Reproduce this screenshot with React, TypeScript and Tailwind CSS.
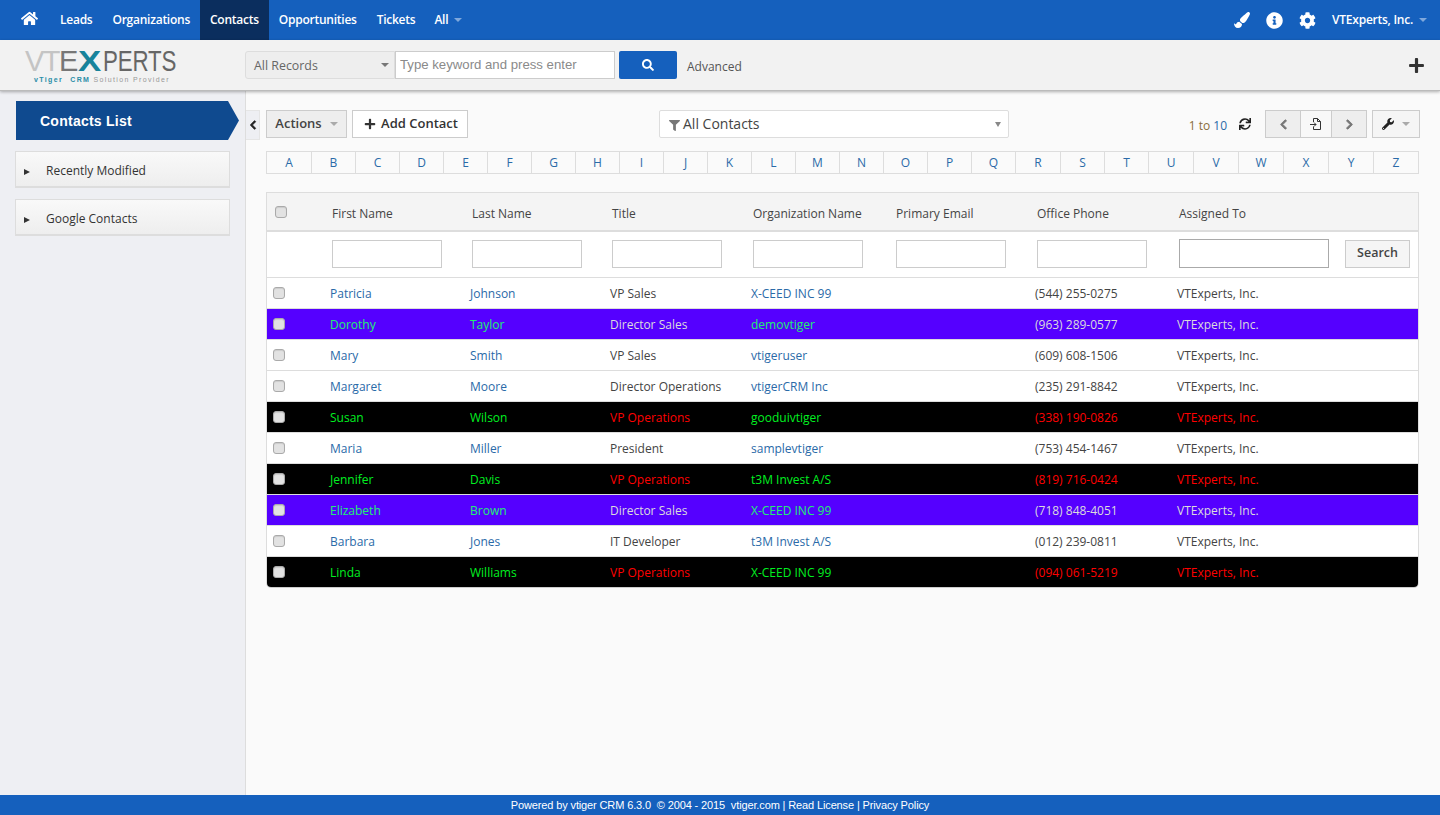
import { FaHome, FaPaintBrush, FaInfoCircle, FaCog, FaSearch, FaPlus, FaChevronLeft, FaChevronRight, FaSync, FaWrench, FaFilter } from "react-icons/fa";

const NAV = ["Leads", "Organizations", "Contacts", "Opportunities", "Tickets"];
const LETTERS = "ABCDEFGHIJKLMNOPQRSTUVWXYZ".split("");
const WIDE_LETTERS = "ARUVWXY";
const COLUMNS = ["First Name", "Last Name", "Title", "Organization Name", "Primary Email", "Office Phone", "Assigned To"];

type Contact = {
  first: string;
  last: string;
  title: string;
  org: string;
  phone: string;
  tone?: "purple" | "black";
};

const CONTACTS: Contact[] = [
  { first: "Patricia", last: "Johnson", title: "VP Sales", org: "X-CEED INC 99", phone: "(544) 255-0275" },
  { first: "Dorothy", last: "Taylor", title: "Director Sales", org: "demovtiger", phone: "(963) 289-0577", tone: "purple" },
  { first: "Mary", last: "Smith", title: "VP Sales", org: "vtigeruser", phone: "(609) 608-1506" },
  { first: "Margaret", last: "Moore", title: "Director Operations", org: "vtigerCRM Inc", phone: "(235) 291-8842" },
  { first: "Susan", last: "Wilson", title: "VP Operations", org: "gooduivtiger", phone: "(338) 190-0826", tone: "black" },
  { first: "Maria", last: "Miller", title: "President", org: "samplevtiger", phone: "(753) 454-1467" },
  { first: "Jennifer", last: "Davis", title: "VP Operations", org: "t3M Invest A/S", phone: "(819) 716-0424", tone: "black" },
  { first: "Elizabeth", last: "Brown", title: "Director Sales", org: "X-CEED INC 99", phone: "(718) 848-4051", tone: "purple" },
  { first: "Barbara", last: "Jones", title: "IT Developer", org: "t3M Invest A/S", phone: "(012) 239-0811" },
  { first: "Linda", last: "Williams", title: "VP Operations", org: "X-CEED INC 99", phone: "(094) 061-5219", tone: "black" },
];

function Caret({ className }: { className: string }) {
  return <span className={`inline-block h-0 w-0 border-x-4 border-t-4 border-x-transparent ${className}`} />;
}

function Check() {
  return <span className="block h-3 w-3 rounded-[3px] border border-[#aaa] bg-[#e2e2e2] shadow-[inset_0_1px_1px_rgba(0,0,0,0.1)]" />;
}

function SideCard({ label }: { label: string }) {
  return (
    <div className="ml-[15px] flex h-[37px] w-[215px] items-center border border-[#ddd] border-b-2 bg-gradient-to-b from-[#f9f9f9] to-[#eeeeee] text-[12px] text-[#333]">
      <span className="ml-2 mr-4 mt-[5px] h-0 w-0 border-y-[3px] border-l-[6px] border-y-transparent border-l-[#333]" />
      <span className="pt-[3px]">{label}</span>
    </div>
  );
}

function ContactRow({ c }: { c: Contact }) {
  const bg = c.tone === "purple" ? "bg-[#5500ff]" : c.tone === "black" ? "bg-black" : "bg-white";
  const link = c.tone === "purple" ? "text-[#22f070]" : c.tone === "black" ? "text-[#00f020]" : "text-[#2a6aa8]";
  const plain = c.tone === "purple" ? "text-[#dcdcdc]" : c.tone === "black" ? "text-[#ff0000]" : "text-[#444]";
  return (
    <tr className={`h-[31px] border-b border-[#ddd] last:border-b-0 ${bg}`}>
      <td className="pl-[6px]"><Check /></td>
      <td className={`pt-[3px] ${link}`}>{c.first}</td>
      <td className={`pt-[3px] ${link}`}>{c.last}</td>
      <td className={`pt-[3px] ${plain}`}>{c.title}</td>
      <td className={`pt-[3px] ${link}`}>{c.org}</td>
      <td />
      <td className={`pt-[3px] ${plain}`}>{c.phone}</td>
      <td className={`pt-[3px] ${plain}`} colSpan={2}>VTExperts, Inc.</td>
    </tr>
  );
}

export default function App() {
  return (
    <div className="flex h-[815px] flex-col overflow-hidden bg-[#fafafa] font-['Open_Sans',sans-serif] text-[12px] text-[#333]">
      <header className="flex h-10 shrink-0 items-center bg-[#1560bd] text-[12px] font-semibold text-white">
        <FaHome className="ml-[21px] mr-3 mb-1 text-[17px]" />
        {NAV.map((item) => (
          <a
            key={item}
            className={`flex h-10 items-center px-2.5 tracking-[-0.25px] ${item === "Contacts" ? "bg-[#0b2e5e]" : ""}`}
          >
            {item}
          </a>
        ))}
        <span className="ml-[9px] flex items-center gap-1.5 tracking-[-0.25px]">
          All <Caret className="border-t-[#7fa8dc]" />
        </span>
        <div className="ml-auto mr-[13px] flex items-center">
          <FaPaintBrush className="mr-4 text-[16px]" />
          <FaInfoCircle className="mr-[16px] text-[17px]" />
          <FaCog className="mr-[16px] text-[17px]" />
          <span className="tracking-[-0.25px]">VTExperts, Inc.</span>
          <Caret className="ml-[6px] border-t-[#7fa8dc]" />
        </div>
      </header>

      <div className="relative z-10 flex h-[51px] shrink-0 items-center border-b border-[#bbb] bg-[#f2f2f2] shadow-[0_1px_3px_rgba(0,0,0,0.3)]">
        <div className="ml-[25px] w-[220px] font-['Liberation_Sans',sans-serif]">
          <div className="mt-[2px] flex h-6 items-center whitespace-nowrap text-[29px] leading-6">
            <span className="tracking-[-1.5px] text-[#c4c4c4]">VT</span>
            <span className="text-[#777]">E</span>
            <span className="inline-block w-[25px] origin-left scale-x-[1.2] font-bold text-[#17839b]">X</span>
            <span className="inline-block origin-left scale-x-[0.77] tracking-[-0.2px] text-[#666]">PERTS</span>
          </div>
          <div className="ml-[9px] mt-[2px] whitespace-nowrap text-[7px] leading-[9px] tracking-[1.35px] text-[#999]">
            <span className="font-bold text-[#2a8ea8]">vTiger</span>{" "}
            <span className="ml-1 font-bold text-[#2a8ea8]">CRM</span> Solution Provider
          </div>
        </div>
        <div className="flex h-7 w-[150px] items-center justify-between rounded-l-[3px] border border-[#ddd] bg-[#eeeeee] pl-2 pr-[5px] text-[12.4px] text-[#666]">
          <span className="pt-[2px]">All Records</span> <Caret className="border-t-[#777]" />
        </div>
        <input
          placeholder="Type keyword and press enter"
          className="h-7 w-[220px] border border-[#ccc] bg-white px-1 pb-[2px] font-['Liberation_Sans',sans-serif] text-[13.2px] placeholder:text-[#8a8a8a]"
        />
        <button className="ml-1 flex h-7 w-[58px] items-center justify-center rounded-[2px] bg-[#1560bd] text-[12px] text-white">
          <FaSearch />
        </button>
        <a className="ml-[10px] pt-1 text-[#555]">Advanced</a>
        <FaPlus className="ml-auto mr-[15px] text-[17px] text-[#333]" />
      </div>

      <div className="flex min-h-0 flex-1">
        <aside className="flex w-[246px] shrink-0 flex-col gap-[11px] border-r border-[#ddd] bg-[#eeeff3] pt-[10px]">
          <div className="ml-4 flex h-[39px] w-[223px] items-center bg-[#0f4a8f] pl-6 pt-[2px] font-['Liberation_Sans',sans-serif] text-[14px] font-bold tracking-[0.25px] text-white [clip-path:polygon(0_0,212px_0,100%_50%,212px_100%,0_100%)]">
            Contacts List
          </div>
          <SideCard label="Recently Modified" />
          <SideCard label="Google Contacts" />
        </aside>

        <main className="relative min-w-0 flex-1 pl-5 pr-[21px] pt-[19px]">
          <div className="absolute left-0 top-[19px] flex h-[30px] w-[14px] items-center justify-center border-y border-r border-[#e5e5e5] bg-[#eeeff3] text-[10px] text-[#222]">
            <FaChevronLeft stroke="currentColor" strokeWidth={40} />
          </div>

          <div className="flex h-7 items-center">
            <button className="flex h-7 w-[81px] items-center justify-center gap-2 border border-[#ccc] bg-[#eeeeee] text-[13px] font-semibold text-[#444]">
              Actions <Caret className="border-t-[#aaa]" />
            </button>
            <button className="ml-[5px] flex h-7 w-[116px] items-center justify-center gap-[5px] border border-[#ccc] bg-white pl-[2px] text-[13px] font-semibold text-[#333]">
              <FaPlus className="text-[12px]" /> Add Contact
            </button>
            <div className="ml-[191px] flex h-7 w-[350px] items-center rounded-[2px] border border-[#ddd] bg-white pl-[9px] pr-[7px] text-[14px] text-[#444]">
              <FaFilter className="mr-[3px] mt-[2px] text-[11px] text-[#777]" /> <span className="pb-[2px]">All Contacts</span>
              <Caret className="ml-auto border-x-[3px] border-t-[5px] border-t-[#888]" />
            </div>
            <span className="ml-auto pt-[3px] text-[12px] text-[#8a6d3b]">
              1 to <span className="text-[#2a6aa8]">10</span>
            </span>
            <FaSync className="ml-[12px] text-[12px] text-[#222]" />
            <div className="ml-[14px] flex h-7 w-[102px] items-stretch border border-[#ccc] bg-[#eeeeee] text-[#777]">
              <span className="flex flex-1 items-center justify-center text-[11px]"><FaChevronLeft stroke="currentColor" strokeWidth={40} /></span>
              <span className="flex w-8 items-center justify-center border-x border-[#ccc] bg-[#f8f8f8]">
                <svg width="14" height="14" viewBox="0 0 14 14" fill="none" stroke="#333" strokeWidth="1">
                  <path d="M4.5 5V1.5h4l3 3v8h-7V9.5M8.5 1.5v3h3M1 7.5h6M5 5.5l2 2-2 2" />
                </svg>
              </span>
              <span className="flex flex-1 items-center justify-center text-[11px]"><FaChevronRight stroke="currentColor" strokeWidth={40} /></span>
            </div>
            <button className="-mr-px ml-[5px] flex h-7 w-[48px] items-center justify-center gap-2 border border-[#ccc] bg-[#f5f5f5] text-[12px] text-[#222]">
              <FaWrench /> <Caret className="border-t-[#aaa]" />
            </button>
          </div>

          <div className="mt-[13px] flex h-[23px] border border-[#ddd] bg-[#fafafa]">
            {LETTERS.map((l) => (
              <a
                key={l}
                className={`flex shrink-0 items-center justify-center border-r border-[#ddd] text-[#2a6aa8] last:border-r-0 ${WIDE_LETTERS.includes(l) ? "w-[45px]" : "w-[44px]"}`}
              >
                {l}
              </a>
            ))}
          </div>

          <div className="mt-[18px] overflow-hidden rounded-b-[5px] border border-[#ddd] border-b-[#ccc]">
            <table className="w-full table-fixed border-collapse">
              <colgroup>
                <col className="w-[63px]" />
                <col className="w-[140px]" />
                <col className="w-[140px]" />
                <col className="w-[141px]" />
                <col className="w-[143px]" />
                <col className="w-[141px]" />
                <col className="w-[142px]" />
                <col className="w-[166px]" />
                <col />
              </colgroup>
              <thead>
                <tr className="h-[38px] border-b-2 border-[#ddd] bg-[#f4f4f4] text-left font-normal text-[#444]">
                  <th className="pl-2 font-normal"><Check /></th>
                  {COLUMNS.map((c) => (
                    <th key={c} className="pl-[2px] pt-[5px] font-normal">{c}</th>
                  ))}
                  <th />
                </tr>
                <tr className="h-[46px] border-b border-[#ddd] bg-white">
                  <th />
                  {COLUMNS.slice(0, 6).map((c) => (
                    <th key={c} className="pb-px pl-[2px]">
                      <input aria-label={c} className="block h-7 w-[110px] border border-[#ccc] bg-white" />
                    </th>
                  ))}
                  <th className="pb-px pl-[2px]">
                    <input aria-label="Assigned To" className="block h-[29px] w-[150px] border border-[#aaa] bg-white" />
                  </th>
                  <th className="pb-px pl-[2px]">
                    <button className="block h-7 w-[65px] border border-[#ccc] bg-[#f5f5f5] text-[12.5px] font-semibold text-[#444]">Search</button>
                  </th>
                </tr>
              </thead>
              <tbody>
                {CONTACTS.map((c) => (
                  <ContactRow key={c.first} c={c} />
                ))}
              </tbody>
            </table>
          </div>
        </main>
      </div>

      <footer className="flex h-5 shrink-0 items-center justify-center whitespace-pre bg-[#1560bd] font-['Liberation_Sans',sans-serif] text-[11px] tracking-[-0.13px] text-white">
        Powered by vtiger CRM 6.3.0  © 2004 - 2015  vtiger.com | Read License | Privacy Policy
      </footer>
    </div>
  );
}
